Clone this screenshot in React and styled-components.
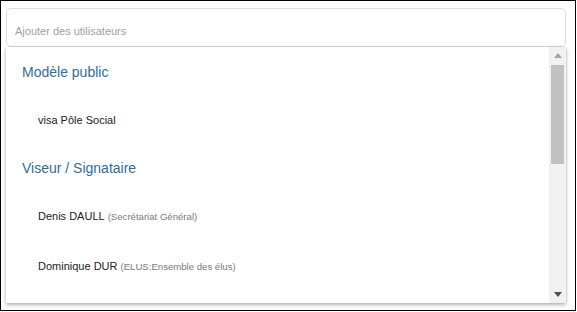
import React from 'react'
import styled, { createGlobalStyle } from 'styled-components'

const GlobalStyle = createGlobalStyle`
  html, body {
    margin: 0;
    padding: 0;
    background: #fff;
  }
  * {
    box-sizing: border-box;
  }
`;

const groups = [
  {
    title: 'Modèle public',
    items: [{ name: 'visa Pôle Social' }],
  },
  {
    title: 'Viseur / Signataire',
    items: [
      { name: 'Denis DAULL', detail: 'Secrétariat Général' },
      { name: 'Dominique DUR', detail: 'ELUS:Ensemble des élus' },
    ],
  },
];

function Arrow({ up, color }) {
  return (
    <svg width="8" height="5" viewBox="0 0 8 5">
      <path d={up ? 'M0 5 L4 0 L8 5 Z' : 'M0 0 L8 0 L4 5 Z'} fill={color} />
    </svg>
  );
}

function App() {
  return (
    <>
      <GlobalStyle />
      <Frame>
        <SearchBox>
          <input placeholder="Ajouter des utilisateurs" />
        </SearchBox>
        <Dropdown>
          <List>
            {groups.map((group) => (
              <React.Fragment key={group.title}>
                <GroupTitle>{group.title}</GroupTitle>
                {group.items.map((item) => (
                  <Option key={item.name}>
                    {item.name}
                    {item.detail && <small>({item.detail})</small>}
                  </Option>
                ))}
              </React.Fragment>
            ))}
          </List>
          <ScrollBar>
            <ScrollButton><Arrow up color="#a3a3a3" /></ScrollButton>
            <ScrollTrack>
              <ScrollThumb />
            </ScrollTrack>
            <ScrollButton><Arrow color="#505050" /></ScrollButton>
          </ScrollBar>
        </Dropdown>
      </Frame>
    </>
  );
}

const Frame = styled.div`
  width: 576px;
  height: 311px;
  border: 1px solid #000;
  background: #fff;
  padding: 7px 9px 0 5px;
  display: flex;
  flex-direction: column;
  overflow: hidden;
  font-family: "Liberation Sans", Arial, sans-serif;
`;

const SearchBox = styled.div`
  height: 39px;
  border: 1px solid #dcdcdc;
  border-radius: 5px;
  background: #fff;
  display: flex;
  align-items: flex-end;
  padding: 0 8px 8px;

  input {
    width: 100%;
    border: none;
    outline: none;
    padding: 0;
    background: transparent;
    font-family: inherit;
    font-size: 11px;
    line-height: 13px;
    color: #333;
  }
  input::placeholder {
    color: #a0a0a0;
  }
`;

const Dropdown = styled.div`
  height: 256px;
  display: flex;
  background: #fff;
  box-shadow: 0 2px 4px rgba(0, 0, 0, 0.28), 0 0 2px rgba(0, 0, 0, 0.12);
`;

const List = styled.div`
  flex: 1;
  overflow: hidden;
  padding-top: 1px;
`;

const GroupTitle = styled.div`
  height: 48px;
  display: flex;
  align-items: center;
  padding-left: 16px;
  font-size: 14px;
  color: #2f6d9c;
`;

const Option = styled.div`
  height: 48px;
  display: flex;
  align-items: center;
  gap: 3px;
  padding-left: 32px;
  font-size: 11px;
  color: #222;

  & + & {
    height: 50px;
    padding-top: 2px;
  }

  small {
    font-size: 9.6px;
    color: #7a7a7a;
  }
`;

const ScrollBar = styled.div`
  width: 17px;
  display: flex;
  flex-direction: column;
  background: #f1f1f1;
`;

const ScrollButton = styled.div`
  height: 17px;
  display: flex;
  align-items: center;
  justify-content: center;
`;

const ScrollTrack = styled.div`
  flex: 1;
  padding: 1px 2px 0;
`;

const ScrollThumb = styled.div`
  height: 99px;
  background: #c1c1c1;
`;

export default App;
